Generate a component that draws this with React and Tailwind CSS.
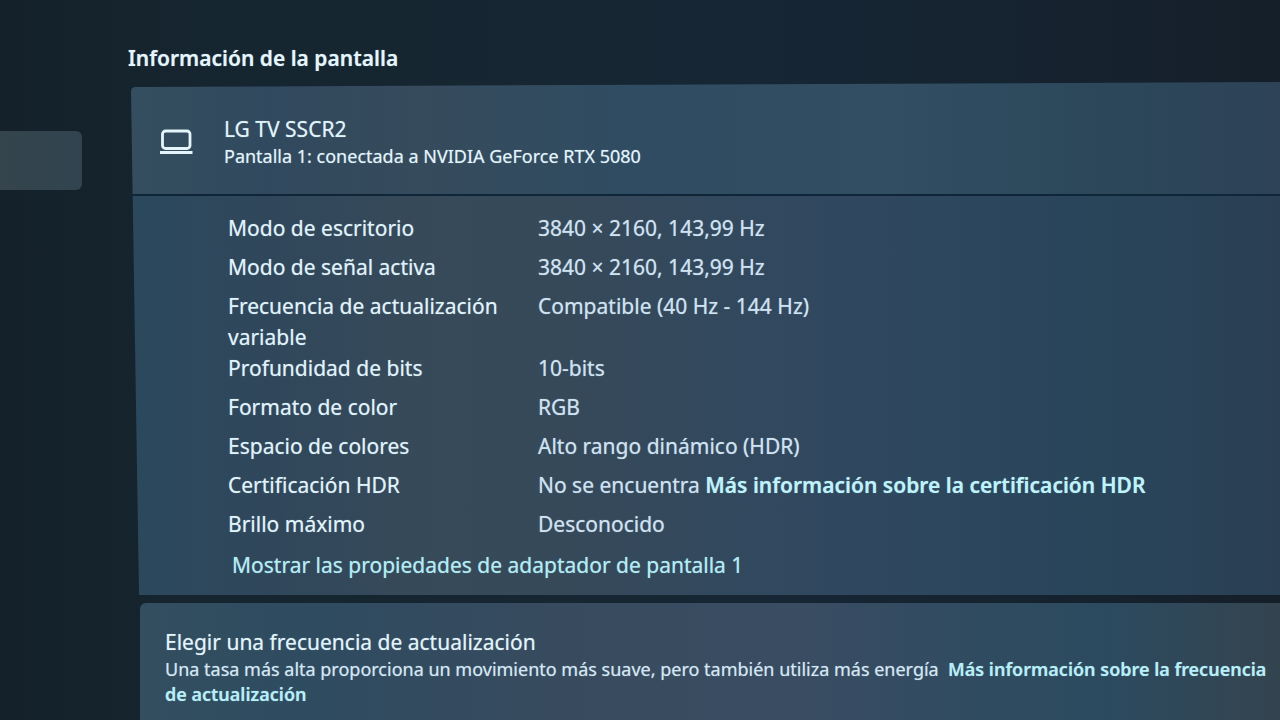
const details = [
  { label: "Modo de escritorio", value: "3840 × 2160, 143,99 Hz" },
  { label: "Modo de señal activa", value: "3840 × 2160, 143,99 Hz" },
  { label: "Frecuencia de actualización variable", value: "Compatible (40 Hz - 144 Hz)" },
  { label: "Profundidad de bits", value: "10-bits" },
  { label: "Formato de color", value: "RGB" },
  { label: "Espacio de colores", value: "Alto rango dinámico (HDR)" },
  {
    label: "Certificación HDR",
    value: "No se encuentra",
    link: "Más información sobre la certificación HDR",
  },
  { label: "Brillo máximo", value: "Desconocido" },
];

function LaptopIcon() {
  return (
    <svg viewBox="0 0 34 26" className="h-[26px] w-[34px] shrink-0" fill="none" stroke="#e4f6fc" aria-hidden="true">
      <rect x="3.5" y="2" width="27.5" height="17.5" rx="3" strokeWidth="2.8" />
      <path d="M1 23.5H33.5" strokeWidth="3.2" />
    </svg>
  );
}

function DisplayCard() {
  return (
    <section className="ml-[131px] bg-[#0f2638] [clip-path:polygon(0_9px,1px_6px,4px_5px,100%_0,100%_100%,8px_100%)]">
      <header className="flex h-[112px] items-center gap-[31px] bg-[linear-gradient(90deg,#344e5f_0%,#31495e_12%,#364b5c_25%,#2f4c62_45%,#314e62_66%,#2c475a_85%,#2e4358_100%)] pt-2 pl-7">
        <LaptopIcon />
        <div className="text-[#e2f4fb]">
          <h2 className="text-[21px] leading-7">LG TV SSCR2</h2>
          <p className="text-[18px] leading-[26px]">Pantalla 1: conectada a NVIDIA GeForce RTX 5080</p>
        </div>
      </header>
      <div className="mt-0.5 bg-[linear-gradient(90deg,#2b485d_0%,#30475b_12%,#374a59_27%,#35495a_40%,#31485f_58%,#2d475e_70%,#29455a_85%,#2a3f53_100%)] pt-[17px] pb-3.5 pl-[97px]">
        <dl>
          {details.map(({ label, value, link }) => (
            <div key={label} className="grid min-h-[39px] grid-cols-[310px_1fr] text-[21px] leading-[31px]">
              <dt className="pr-6 text-[#e0f3fb]">{label}</dt>
              <dd className="text-[#cfe2f2]">
                {value}
                {link && (
                  <>
                    {" "}
                    <a href="#hdr" className="font-semibold text-[#bdf3fb]">{link}</a>
                  </>
                )}
              </dd>
            </div>
          ))}
        </dl>
        <a href="#adaptador" className="mt-0.5 ml-1 inline-block text-[21px] leading-[31px] text-[#b0eef6]">
          Mostrar las propiedades de adaptador de pantalla 1
        </a>
      </div>
    </section>
  );
}

function RefreshRateCard() {
  return (
    <section className="mt-2 ml-[140px] grow rounded-tl-md bg-[linear-gradient(90deg,#324e5f_0%,#2f4b60_15%,#394b5e_40%,#394c62_58%,#2f4b60_75%,#2c4a5f_85%,#34444f_100%)] pt-6 pl-[25px]">
      <h2 className="text-[21px] leading-[30px] text-[#e2f4fb]">Elegir una frecuencia de actualización</h2>
      <p className="text-[18px] leading-[25px] text-[#d3e7f4]">
        Una tasa más alta proporciona un movimiento más suave, pero también utiliza más energía&nbsp;{" "}
        <a href="#frecuencia" className="font-semibold text-[#b5f0f9]">
          Más información sobre la frecuencia de actualización
        </a>
      </p>
    </section>
  );
}

export default function App() {
  return (
    <div className="relative flex min-h-screen flex-col overflow-hidden bg-[linear-gradient(90deg,#14212a_0%,#162630_20%,#162634_60%,#151f2a_100%)] font-['Noto_Sans','Open_Sans',sans-serif] [text-shadow:0_0_1px_rgb(215_240_250/0.55)]">
      <nav aria-label="Secciones" className="absolute top-[131px] left-0">
        <a href="#pantalla" aria-current="page" aria-label="Pantalla" className="block h-[59px] w-[82px] rounded-r-md bg-[linear-gradient(90deg,#35444d,#31444f)]" />
      </nav>
      <main className="flex grow flex-col">
        <h1 className="pt-[42px] pb-2 pl-32 text-[21px] leading-8 font-semibold text-[#e4f6fc]">Información de la pantalla</h1>
        <DisplayCard />
        <RefreshRateCard />
      </main>
    </div>
  );
}
